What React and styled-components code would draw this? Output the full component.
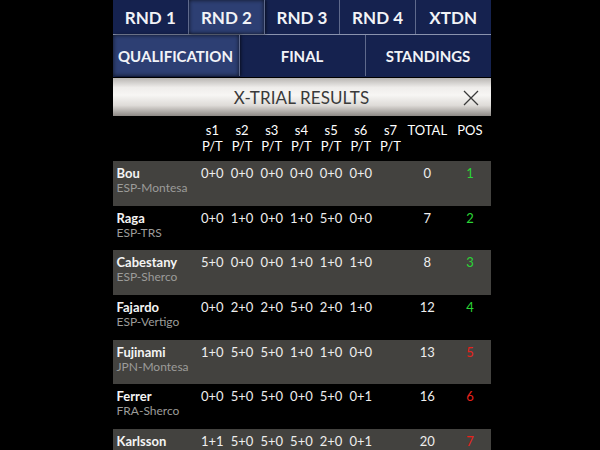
import React from 'react';
import styled, { createGlobalStyle } from 'styled-components';

const GlobalStyle = createGlobalStyle`
  html, body {
    margin: 0;
    padding: 0;
    background: #000;
  }
  body {
    font-family: Lato, "Open Sans", sans-serif;
    color: #fff;
  }
`;

const Page = styled.main`
  width: 378px;
  margin: 0 auto;
  padding-left: 3px;
  height: 450px;
  overflow: hidden;
`;

const TabRow = styled.nav`
  display: grid;
  grid-template-columns: repeat(${p => p.count}, 1fr);
  height: ${p => p.height}px;
  background: #15224f;
  border-bottom: 1px solid ${p => p.line};
`;

const Tab = styled.div`
  display: flex;
  align-items: center;
  justify-content: center;
  font-size: ${p => p.size}px;
  font-weight: 700;
  color: #f2f3f7;
  border-left: 1px solid #5f6a8c;
  background: ${p => (p.active ? '#2d3f73' : 'transparent')};
  box-shadow: ${p => (p.active ? 'inset 0 0 4px rgba(0,0,0,0.7), 2px 0 3px rgba(0,0,0,0.6)' : 'none')};
  &:first-child {
    border-left: none;
  }
`;

const TitleBar = styled.header`
  position: relative;
  display: flex;
  align-items: center;
  justify-content: center;
  height: 38px;
  margin-top: 1px;
  background: linear-gradient(#b9b6b3, #efedeb 25%, #f7f6f4 45%, #dedbd8 72%, #8d8985);
  color: #3a3a3a;
  font-size: 17px;
  letter-spacing: 0.1px;
`;

const Close = styled.svg`
  position: absolute;
  right: 12px;
  top: 12px;
`;

const Grid = styled.div`
  display: grid;
  grid-template-columns: 85px repeat(7, 29.7px) 44px 1fr;
  align-items: start;
`;

const HeadRow = styled(Grid)`
  height: 45px;
  padding-top: 6px;
  box-sizing: border-box;
  font-size: 13px;
  line-height: 16px;
`;

const HeadCell = styled.div`
  text-align: center;
`;

const Row = styled(Grid)`
  height: 44.7px;
  box-sizing: border-box;
  padding-top: 5px;
  background: ${p => (p.shaded ? '#43423f' : '#000')};
  font-size: 13px;
  line-height: 15px;
`;

const Rider = styled.div`
  padding-left: 4px;
`;

const Name = styled.div`
  font-weight: 700;
  color: #f4f4f4;
`;

const Team = styled.div`
  font-size: 12px;
  color: #9c9c9a;
  line-height: 14px;
`;

const Cell = styled.div`
  text-align: center;
  color: #eee;
`;

const Pos = styled.div`
  text-align: center;
  color: ${p => (p.top ? '#2bd636' : '#e8221c')};
`;

const riders = [
  { name: 'Bou', team: 'ESP-Montesa', s: ['0+0', '0+0', '0+0', '0+0', '0+0', '0+0'], total: 0 },
  { name: 'Raga', team: 'ESP-TRS', s: ['0+0', '1+0', '0+0', '1+0', '5+0', '0+0'], total: 7 },
  { name: 'Cabestany', team: 'ESP-Sherco', s: ['5+0', '0+0', '0+0', '1+0', '1+0', '1+0'], total: 8 },
  { name: 'Fajardo', team: 'ESP-Vertigo', s: ['0+0', '2+0', '2+0', '5+0', '2+0', '1+0'], total: 12 },
  { name: 'Fujinami', team: 'JPN-Montesa', s: ['1+0', '5+0', '5+0', '1+0', '1+0', '0+0'], total: 13 },
  { name: 'Ferrer', team: 'FRA-Sherco', s: ['0+0', '5+0', '5+0', '0+0', '5+0', '0+1'], total: 16 },
  { name: 'Karlsson', team: 'SWE-Gas Gas', s: ['1+1', '5+0', '5+0', '5+0', '2+0', '0+1'], total: 20 },
];

export default function App() {
  return (
    <Page>
      <GlobalStyle />
      <TabRow count={5} height={34} line="#8a93ae">
        <Tab size={17}>RND 1</Tab>
        <Tab size={17} active>RND 2</Tab>
        <Tab size={17}>RND 3</Tab>
        <Tab size={17}>RND 4</Tab>
        <Tab size={17}>XTDN</Tab>
      </TabRow>
      <TabRow count={3} height={41} line="#15224f">
        <Tab size={15} active>QUALIFICATION</Tab>
        <Tab size={15}>FINAL</Tab>
        <Tab size={15}>STANDINGS</Tab>
      </TabRow>
      <TitleBar>
        X-TRIAL RESULTS
        <Close width="16" height="16" viewBox="0 0 16 16">
          <path d="M1 1 L15 15 M15 1 L1 15" stroke="#3a3a3a" strokeWidth="1.3" fill="none" />
        </Close>
      </TitleBar>
      <HeadRow>
        <div />
        {[1, 2, 3, 4, 5, 6, 7].map(n => (
          <HeadCell key={n}>
            s{n}
            <br />
            P/T
          </HeadCell>
        ))}
        <HeadCell>TOTAL</HeadCell>
        <HeadCell>POS</HeadCell>
      </HeadRow>
      {riders.map((r, i) => (
        <Row key={r.name} shaded={i % 2 === 0}>
          <Rider>
            <Name>{r.name}</Name>
            <Team>{r.team}</Team>
          </Rider>
          {r.s.map((v, j) => (
            <Cell key={j}>{v}</Cell>
          ))}
          <Cell />
          <Cell>{r.total}</Cell>
          <Pos top={i < 4}>{i + 1}</Pos>
        </Row>
      ))}
    </Page>
  );
}
